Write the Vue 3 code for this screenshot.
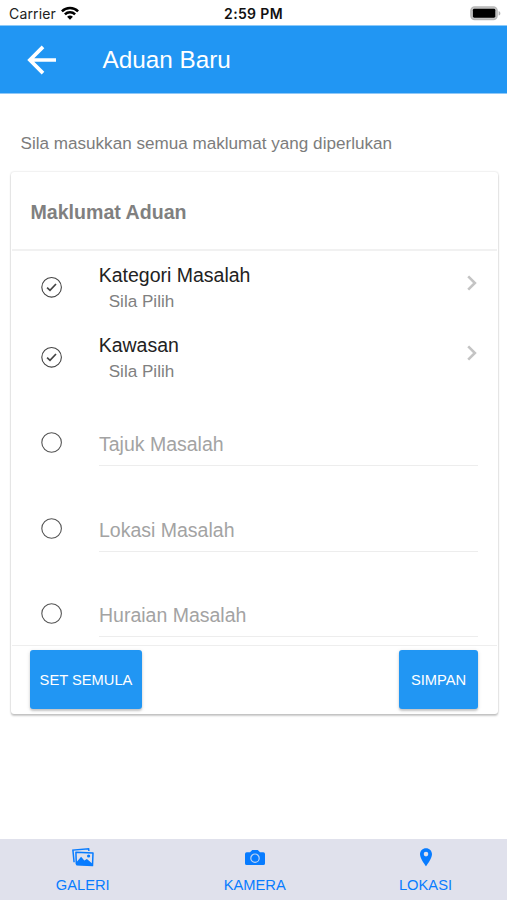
<script setup>
const choices = ['Kategori Masalah', 'Kawasan']
const fields = ['Tajuk Masalah', 'Lokasi Masalah', 'Huraian Masalah']
</script>

<template>
  <div class="screen">
    <div class="status">
      <div class="carrier">
        <span>Carrier</span>
        <svg class="wifi" viewBox="0 0 18 14" width="18" height="14">
          <g fill="none" stroke="#000" stroke-width="2.5">
            <path d="M0.9 5.3a11.5 11.5 0 0 1 16.2 0" />
            <path d="M3.9 8.4a7.2 7.2 0 0 1 10.2 0" />
          </g>
          <path d="M9 13.7L6.1 10.8a4.2 4.2 0 0 1 5.8 0z" />
        </svg>
      </div>
      <div class="time">2:59 PM</div>
      <div class="power">
        <svg viewBox="0 0 31 15" width="31" height="15">
          <rect x="0.9" y="0.9" width="26.2" height="12.7" rx="3.8" fill="#c4c4c4" stroke="#b6b6b6" stroke-width="1.4" />
          <rect x="2.9" y="2.8" width="22.4" height="8.9" rx="1.4" />
          <path d="M28.6 4.9c2.4.9 2.4 3.8 0 4.7z" fill="#b2b2b2" />
        </svg>
      </div>
    </div>
    <header class="bar">
      <svg class="back" viewBox="0 0 30 30" width="30" height="30" fill="none" stroke="#fff" stroke-width="3.7">
        <path d="M29 15H3M16 1.9L2.9 15L16 28.1" />
      </svg>
      <h1>Aduan Baru</h1>
    </header>
    <main>
      <p class="intro">Sila masukkan semua maklumat yang diperlukan</p>
      <section class="card">
        <h2>Maklumat Aduan</h2>
        <div class="rows">
          <div v-for="c in choices" :key="c" class="choice">
            <svg class="mark" viewBox="0 0 22 22" width="22" height="22" fill="none" stroke="#444">
              <circle cx="10.6" cy="11.3" r="9.8" stroke-width="1.1" />
              <path d="M6.1 11.7L9 14.4L15 8" stroke-width="1.7" />
            </svg>
            <div class="labels">
              <div class="name">{{ c }}</div>
              <div class="value">Sila Pilih</div>
            </div>
            <svg class="chevron" viewBox="0 0 10 16" width="10" height="16" fill="none" stroke="#c4c4c4" stroke-width="2.6">
              <path d="M1.2 1.3L7.9 8L1.2 14.7" />
            </svg>
          </div>
          <div v-for="f in fields" :key="f" class="field">
            <svg class="mark" viewBox="0 0 22 22" width="22" height="22" fill="none" stroke="#555">
              <circle cx="10.6" cy="11.5" r="9.8" stroke-width="1.1" />
            </svg>
            <div class="input">{{ f }}</div>
          </div>
        </div>
        <footer class="actions">
          <button class="reset">SET SEMULA</button>
          <button class="save">SIMPAN</button>
        </footer>
      </section>
    </main>
    <nav class="tabs">
      <div class="tab">
        <svg viewBox="0 0 22 20" width="22" height="20">
          <path d="M2.1 14.2L.9 2.1L16.6.8l.3 2.2" fill="none" stroke="#087cff" stroke-width="1.5" />
          <path d="M4.3 15.6L3.9 4.2L21 5L20.5 17.6L5 16.8z" fill="none" stroke="#087cff" stroke-width="1.5" stroke-linejoin="round" />
          <path d="M4.6 14L9.1 8.8l3.2 3.6l2.6-1.4l5.6 4.7v1.9L4.6 17z" fill="#087cff" />
          <circle cx="16.6" cy="8" r="1.6" fill="#087cff" />
        </svg>
        <span>GALERI</span>
      </div>
      <div class="tab">
        <svg viewBox="0 0 22 20" width="22" height="20">
          <path fill="#087cff" d="M2.7 4.3H6L8.2 1.9h5.6L16 4.3h3.3q1.7 0 1.7 1.7v9.4q0 1.7-1.7 1.7H2.7Q1 17.1 1 15.4V6q0-1.7 1.7-1.7z" />
          <circle cx="11" cy="10.2" r="4.2" fill="none" stroke="#bcd3f2" stroke-width="1.2" />
        </svg>
        <span>KAMERA</span>
      </div>
      <div class="tab">
        <svg viewBox="0 0 22 20" width="22" height="20">
          <path fill="#087cff" fill-rule="evenodd" d="M11 .2C7.6.2 5 2.8 5 6.2c0 4.4 6 12 6 12s6-7.6 6-12c0-3.4-2.6-6-6-6zm0 3.6a2.3 2.3 0 1 1 0 4.6a2.3 2.3 0 0 1 0-4.6z" />
        </svg>
        <span>LOKASI</span>
      </div>
    </nav>
  </div>
</template>

<style>
body {
  margin: 0;
  background: #fff;
}
</style>

<style scoped>
.screen {
  height: 900px;
  display: flex;
  flex-direction: column;
  overflow: hidden;
  background: #fff;
  font-family: "Liberation Sans", Arial, sans-serif;
}
.status {
  height: 25px;
  flex: none;
  display: grid;
  grid-template-columns: 1fr auto 1fr;
  align-items: center;
  padding: 2px 6px 0 9px;
  box-sizing: border-box;
  font-family: Inter, sans-serif;
  font-size: 14px;
  line-height: 20px;
  color: #222;
}
.carrier {
  display: flex;
  align-items: center;
  gap: 5px;
  letter-spacing: 0.15px;
}
.wifi {
  margin-top: -2px;
}
.time {
  margin-right: 3px;
  font-weight: 600;
  letter-spacing: 0.35px;
  color: #111;
}
.power {
  display: flex;
  justify-content: flex-end;
}
.bar {
  height: 68px;
  flex: none;
  display: flex;
  align-items: center;
  gap: 45.5px;
  padding-left: 27px;
  background: #2196f3;
  border-top: 1px solid #8ccaf9;
  box-sizing: border-box;
  box-shadow: 0 1px 0 #90c8f7;
}
h1 {
  margin: 0;
  font-size: 24.3px;
  font-weight: 400;
  line-height: 30px;
  color: #fff;
}
main {
  flex: 1;
  padding: 0 9.5px 0 10.5px;
}
.intro {
  margin: 40px 0 0 10px;
  font-size: 17.1px;
  line-height: 22px;
  color: #7c7c7c;
}
.card {
  margin: 17px 0 0;
  padding: 0 1px;
  height: 542px;
  box-sizing: border-box;
  display: flex;
  flex-direction: column;
  border-radius: 3px;
  box-shadow: 0 2px 2px rgba(0, 0, 0, 0.2), 0 0 2px rgba(0, 0, 0, 0.2);
}
h2 {
  margin: 0;
  height: 79px;
  box-sizing: border-box;
  padding: 0 19px;
  border-bottom: 2px solid #f1f1f1;
  font-size: 19.6px;
  line-height: 80px;
  color: #808080;
}
.rows {
  flex: 1;
  min-height: 0;
}
.choice {
  height: 69.6px;
  display: flex;
  padding: 0 20px 0 29.4px;
}
.choice .mark {
  margin-top: 25px;
}
.mark {
  flex: none;
}
.labels {
  flex: 1;
  padding: 11.4px 0 0 35.8px;
}
.name {
  font-size: 19.5px;
  line-height: 26px;
  color: #222;
}
.value {
  padding-left: 10px;
  font-size: 17.1px;
  line-height: 28px;
  color: #808080;
}
.chevron {
  margin-top: 24px;
}
.field {
  height: 85.6px;
  display: flex;
  padding: 0 19px 0 29.4px;
}
.field .mark {
  margin-top: 41px;
}
.input {
  flex: 1;
  height: 75.8px;
  box-sizing: border-box;
  margin-left: 36.1px;
  padding-top: 41px;
  border-bottom: 1px solid #ededed;
  font-size: 19.5px;
  line-height: 26px;
  color: #a3a3a3;
}
.actions {
  height: 69px;
  flex: none;
  box-sizing: border-box;
  display: flex;
  align-items: flex-start;
  justify-content: space-between;
  padding: 4px 18.5px 0;
  border-top: 1px solid #eee;
}
button {
  height: 59px;
  padding: 0;
  border: 0;
  border-radius: 3px;
  background: #2196f3;
  color: #fff;
  font-family: inherit;
  font-size: 14.7px;
  box-shadow: 0 2px 2px rgba(0, 0, 0, 0.16), 0 1px 4px rgba(0, 0, 0, 0.12);
}
.reset {
  width: 112px;
}
.save {
  width: 79px;
}
.tabs {
  height: 61px;
  flex: none;
  display: grid;
  grid-template-columns: 165.5px 178.5px 163px;
  background: #e0e1ec;
}
.tab {
  display: flex;
  flex-direction: column;
  align-items: center;
  gap: 8px;
  padding-top: 9px;
  box-sizing: border-box;
  font-size: 14.7px;
  line-height: 18px;
  color: #087cff;
}
</style>
